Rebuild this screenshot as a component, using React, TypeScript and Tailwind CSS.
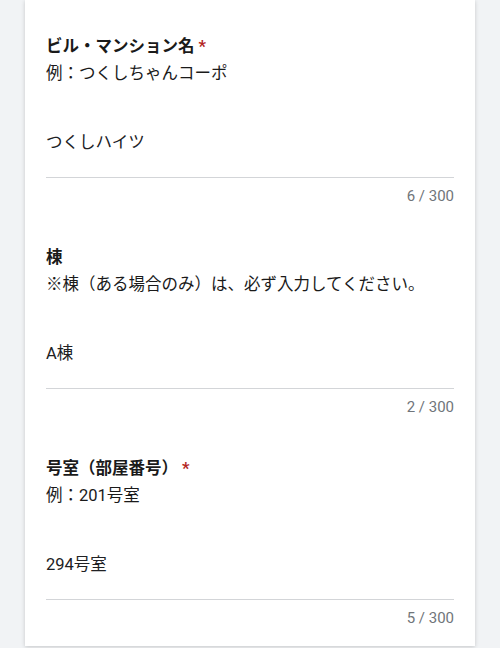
import React from "react";

type Q = { title: string; required: boolean; desc: string; value: string; count: string };

const qs: Q[] = [
  { title: "ビル・マンション名", required: true, desc: "例：つくしちゃんコーポ", value: "つくしハイツ", count: "6 / 300" },
  { title: "棟", required: false, desc: "※棟（ある場合のみ）は、必ず入力してください。", value: "A棟", count: "2 / 300" },
  { title: "号室（部屋番号）", required: true, desc: "例：201号室", value: "294号室", count: "5 / 300" },
];

const font = { fontFamily: "Roboto, 'Noto Sans CJK JP', sans-serif" };

export default function App() {
  return (
    <div className="min-h-[648px] w-[500px] bg-[#f1f3f5] px-[25px]" style={font}>
      <div className="flex flex-col gap-[38px] bg-white px-[21px] pb-[18px] pt-[33px] shadow-[0_1px_4px_rgba(0,0,0,0.18)]">
        {qs.map((q) => (
          <div key={q.title} className="flex flex-col">
            <div className="text-[16.5px] font-bold leading-[27px] text-[#1a1a1a]">
              {q.title}
              {q.required && <span className="text-[#b3261e]"> *</span>}
            </div>
            <div className="text-[16.5px] leading-[27px] text-[#1a1a1a]">{q.desc}</div>
            <div className="mt-[44px] border-b border-[#d3d5d8] pb-[22px] text-[16.5px] leading-6 text-[#202124]">
              {q.value}
            </div>
            <div className="mt-[8px] text-right text-[15px] leading-5 text-[#70757a]">{q.count}</div>
          </div>
        ))}
      </div>
    </div>
  );
}
